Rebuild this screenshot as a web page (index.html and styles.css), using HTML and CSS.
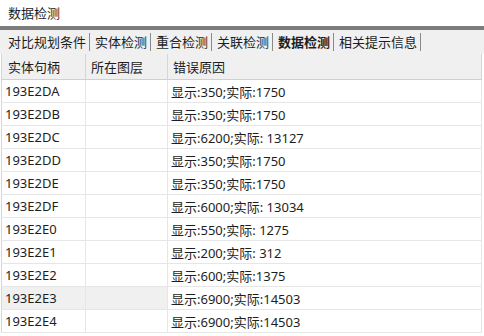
FILE: index.html
```html
<!DOCTYPE html>
<html lang="zh">
<head>
    <meta charset="UTF-8">
    <title>数据检测</title>
    <link rel="stylesheet" href="styles.css">
</head>
<body>
    <div class="title">数据检测</div>
    <div class="rule"></div>

    <div class="tabs">
        <span class="tab">对比规划条件</span>
        <span class="tab">实体检测</span>
        <span class="tab">重合检测</span>
        <span class="tab">关联检测</span>
        <span class="tab active">数据检测</span>
        <span class="tab">相关提示信息</span>
    </div>

    <table class="grid">
        <colgroup>
            <col class="col-handle">
            <col class="col-layer">
            <col>
        </colgroup>
        <thead>
            <tr>
                <th>实体句柄</th>
                <th>所在图层</th>
                <th>错误原因</th>
            </tr>
        </thead>
        <tbody>
            <tr><td>193E2DA</td><td></td><td>显示:350;实际:1750</td></tr>
            <tr><td>193E2DB</td><td></td><td>显示:350;实际:1750</td></tr>
            <tr><td>193E2DC</td><td></td><td>显示:6200;实际: 13127</td></tr>
            <tr><td>193E2DD</td><td></td><td>显示:350;实际:1750</td></tr>
            <tr><td>193E2DE</td><td></td><td>显示:350;实际:1750</td></tr>
            <tr><td>193E2DF</td><td></td><td>显示:6000;实际: 13034</td></tr>
            <tr><td>193E2E0</td><td></td><td>显示:550;实际: 1275</td></tr>
            <tr><td>193E2E1</td><td></td><td>显示:200;实际: 312</td></tr>
            <tr><td>193E2E2</td><td></td><td>显示:600;实际:1375</td></tr>
            <tr class="selected"><td>193E2E3</td><td></td><td>显示:6900;实际:14503</td></tr>
            <tr><td>193E2E4</td><td></td><td>显示:6900;实际:14503</td></tr>
        </tbody>
    </table>
</body>
</html>
```

FILE: styles.css
```css
body {
    margin: 0;
    background: #ffffff;
    font-family: "Noto Sans", "Noto Sans CJK SC", sans-serif;
    font-size: 13px;
    color: #1e1e1e;
    overflow: hidden;
}

.title {
    height: 26px;
    line-height: 26px;
    padding-left: 8px;
    font-family: "Noto Sans CJK SC", sans-serif;
}

.rule {
    height: 4px;
    background: #7c7c7c;
}

.tabs {
    display: flex;
    align-items: center;
    height: 24px;
    padding-left: 3px;
    background: #f0f0f0;
    font-family: "Noto Sans CJK SC", sans-serif;
}

.tab {
    padding: 0 3px 0 5px;
    line-height: 18px;
    border-right: 1px solid #8a8a8a;
}

.tab.active {
    font-weight: bold;
}

.grid {
    width: 481px;
    margin-left: 1px;
    border-collapse: collapse;
    table-layout: fixed;
    border-left: 1px solid #d6d6d6;
    border-right: 1px solid #a0a0a0;
}

.col-handle {
    width: 84px;
}

.col-layer {
    width: 82px;
}

.grid th {
    height: 25px;
    padding: 0 0 0 5px;
    background: #f0f0f0;
    border-right: 1px solid #d6d6d6;
    border-bottom: 1px solid #d0d0d0;
    font-family: "Noto Sans CJK SC", sans-serif;
    font-weight: normal;
    text-align: left;
}

.grid th:first-child {
    padding-left: 6px;
}

.grid td {
    height: 22px;
    padding: 0 0 0 3px;
    border-right: 1px solid #e6e6e6;
    border-bottom: 1px solid #e6e6e6;
    white-space: nowrap;
}

.selected td:nth-child(1),
.selected td:nth-child(2) {
    background: #f0f0f0;
}
```
